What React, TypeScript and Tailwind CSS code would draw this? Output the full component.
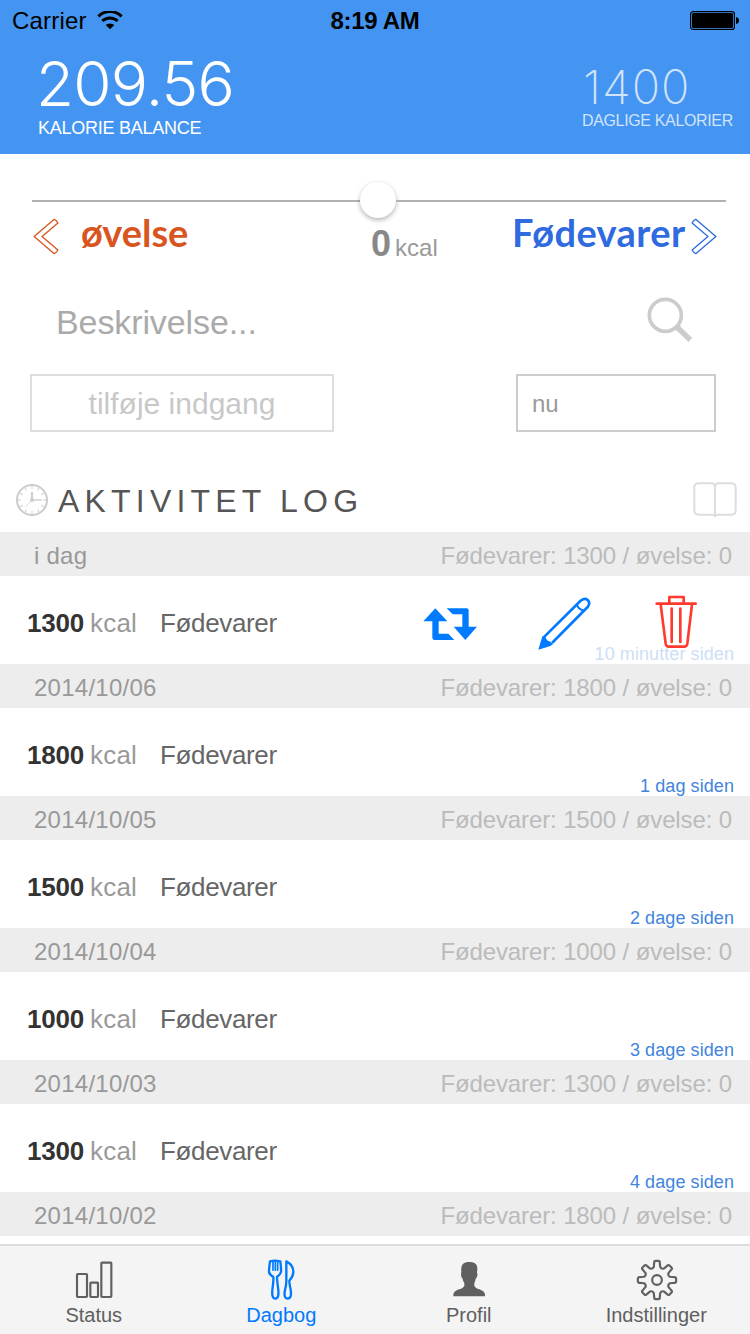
import type { ReactNode } from "react";

const SANS = "font-['Liberation_Sans',Arial,sans-serif]";

type Entry = { day: string; kcal: string; ago: string; active?: boolean };

const ENTRIES: Entry[] = [
  { day: "i dag", kcal: "1300", ago: "10 minutter siden", active: true },
  { day: "2014/10/06", kcal: "1800", ago: "1 dag siden" },
  { day: "2014/10/05", kcal: "1500", ago: "2 dage siden" },
  { day: "2014/10/04", kcal: "1000", ago: "3 dage siden" },
  { day: "2014/10/03", kcal: "1300", ago: "4 dage siden" },
];

function StatusBar() {
  return (
    <div className="grid h-[42px] grid-cols-3 text-2xl leading-[42px] text-black">
      <div className="flex pl-[12px]">
        <span className="tracking-[0.2px]">Carrier</span>
        <svg className="mt-[11px] ml-[10px] h-[19px] w-[26px]" viewBox="0 0 78 57">
          <path d="M4 16A50 50 0 0 1 74 16" fill="none" stroke="currentColor" strokeWidth="9" />
          <path d="M16 30A33 33 0 0 1 62 30" fill="none" stroke="currentColor" strokeWidth="9" />
          <path d="M26 42A20 20 0 0 1 52 42L39 55Z" fill="currentColor" />
        </svg>
      </div>
      <div className="text-center font-bold tracking-[-0.3px]">8:19 AM</div>
      <div className="flex justify-end pr-[11px]">
        <svg className="mt-[11px] h-[19px] w-[49px]" viewBox="0 0 49 19">
          <rect x="0.6" y="0.6" width="43.8" height="17.8" rx="2.5" fill="none" stroke="currentColor" strokeWidth="1.2" />
          <rect x="2" y="2" width="41" height="15" rx="1.5" fill="currentColor" />
          <path d="M46 6Q49 6.5 49 9.5T46 13Z" fill="currentColor" />
        </svg>
      </div>
    </div>
  );
}

function Header() {
  return (
    <header className="h-[154px] bg-[#4495f1] text-white">
      <StatusBar />
      <div className="flex justify-between pr-[17px] pl-[38px]">
        <div className="whitespace-nowrap">
          <div className="-ml-[2px] h-[75px] pt-[11px] font-['Inter',sans-serif] text-[62px] leading-[62px] font-light tracking-[-0.8px]">
            209.56
          </div>
          <div className="text-lg leading-[22px] tracking-[-0.25px]">KALORIE BALANCE</div>
        </div>
        <div className="w-[151px] pt-[22px] whitespace-nowrap text-white/75">
          <div className="h-[46px] pl-px font-['Inter',sans-serif] text-[47px] leading-[46px] font-extralight tracking-[1px]">1400</div>
          <div className="text-base leading-[21px] tracking-[-0.35px]">DAGLIGE KALORIER</div>
        </div>
      </div>
    </header>
  );
}

function Chevron({ className }: { className: string }) {
  return (
    <svg className={className} viewBox="0 0 78 112">
      <path
        d="M3 56L64 4Q70 6 75 15L27 56L75 97Q70 106 64 108Z"
        fill="none"
        stroke="currentColor"
        strokeWidth="4"
        strokeLinejoin="round"
      />
    </svg>
  );
}

function CalorieSlider() {
  return (
    <section className="h-[120px] pt-[28px]">
      <div className="mr-[24px] ml-[32px] flex h-[36px] items-center">
        <div className="mt-[2px] h-[2px] w-[328px] bg-[#b2b2b2]" />
        <div className="size-[36px] rounded-full bg-white shadow-[0_2px_5px_rgba(0,0,0,0.3)]" />
        <div className="mt-[2px] h-[2px] flex-1 bg-[#b2b2b2]" />
      </div>
      <div className="flex whitespace-nowrap">
        <div className="flex w-[370px] pl-[33px] text-[#d9551f]">
          <Chevron className="h-[37px] w-[26px]" />
          <span className="ml-[22px] font-['Lato',sans-serif] text-[38px] leading-[29px] font-bold">øvelse</span>
        </div>
        <div className="flex w-[142px] pl-px leading-[52px]">
          <span className="text-4xl leading-[52px] font-bold text-[#888888]">0</span>
          <span className="ml-[4px] pt-[4px] text-2xl leading-[52px] text-[#999999]">kcal</span>
        </div>
        <div className="flex text-[#2f6bdf]">
          <span className="w-[179px] font-['Lato',sans-serif] text-[38px] leading-[29px] font-bold tracking-[0.4px]">Fødevarer</span>
          <Chevron className="h-[37px] w-[26px] -scale-x-100" />
        </div>
      </div>
    </section>
  );
}

function EntryForm() {
  return (
    <section className="h-[182px] pt-[20px]">
      <div className="flex h-[80px] justify-between pr-[57px] pl-[56px]">
        <span className="text-[34px] leading-[56px] tracking-[-0.1px] text-[#aaaaaa]">Beskrivelse...</span>
        <svg className="mt-[3px] h-[46px] w-[46px]" viewBox="0 0 138 138" fill="none" stroke="#cccccc">
          <circle cx="55" cy="55" r="48" strokeWidth="11" />
          <path d="M87 87L130 129" strokeWidth="16" />
          <path d="M87 87L95 95" strokeWidth="19" />
        </svg>
      </div>
      <div className="flex justify-between pr-[34px] pl-[30px]">
        <button className="h-[58px] w-[304px] border-2 border-[#dddddd] text-center text-[30px] leading-[56px] text-[#c8c8c8]">
          tilføje indgang
        </button>
        <div className="h-[58px] w-[200px] border-2 border-[#cccccc] pl-[14px] text-2xl leading-[56px] text-[#999999]">nu</div>
      </div>
    </section>
  );
}

const TICKS = Array.from({ length: 12 }, (_, i) => i * 30);

function LogTitle() {
  return (
    <div className="flex h-[76px] pr-[13px] pl-[16px]">
      <svg className="mt-[28px] size-[32px]" viewBox="0 0 96 96" fill="none" stroke="#cccccc">
        <circle cx="48" cy="48" r="45" strokeWidth="6" />
        {TICKS.map((a) => (
          <path key={a} d="M48 6V15" strokeWidth="3" transform={`rotate(${a} 48 48)`} />
        ))}
        <path d="M48 24V46" strokeWidth="6" />
        <path d="M48 48H78" strokeWidth="4" />
        <path d="M48 48L28 69" strokeWidth="2" />
        <circle cx="48" cy="48" r="6" fill="#cccccc" stroke="none" />
      </svg>
      <h2 className="ml-[10px] flex-1 pt-[24px] text-[32px] leading-[42px] tracking-[5.2px] text-[#555555]">AKTIVITET LOG</h2>
      <svg className="mt-[26px] h-[35px] w-[44px]" viewBox="0 0 132 105" fill="none" stroke="#dddddd" strokeWidth="6">
        <path d="M66 10Q62 4 56 4H17Q4 4 4 17V85Q4 98 17 98H56Q62 98 66 102Q70 98 76 98H115Q128 98 128 85V17Q128 4 115 4H76Q70 4 66 10V103" />
      </svg>
    </div>
  );
}

function DayHeader({ day, kcal }: { day: string; kcal: string }) {
  return (
    <div className="flex h-[44px] justify-between bg-[#ededed] pr-[18px] pl-[34px] text-2xl leading-[47px]">
      <span className="tracking-[0.25px] text-[#999999]">{day}</span>
      <span className="tracking-[-0.12px] text-[#bbbbbb]">Fødevarer: {kcal} / øvelse: 0</span>
    </div>
  );
}

function RowActions() {
  return (
    <div className="ml-auto flex pt-[18px] pr-[52px]">
      <svg className="mt-[13px] h-[35px] w-[55px] text-[#007aff]" viewBox="0 0 165 105" fill="currentColor">
        <path d="M37 4L73 43H47V80H76L94 99H35Q28 99 28 92V43H1Z" />
        <path d="M71 4H131Q137 4 137 10V59H162L127 99L92 59H118V22H89Z" />
      </svg>
      <svg
        className="mt-[3px] ml-[59px] h-[54px] w-[54px] text-[#007aff]"
        viewBox="0 0 162 162"
        fill="none"
        stroke="currentColor"
        strokeWidth="8"
        strokeLinejoin="round"
      >
        <path d="M20 121L130 12Q142 1 152 9Q161 18 152 30L45 138" />
        <path d="M4 158L16 118L26 120Q28 132 38 133L48 142L40 147Z" fill="currentColor" stroke="none" />
        <path d="M119 22Q123 37 140 41" strokeWidth="6" />
      </svg>
      <svg
        className="-mt-[1px] ml-[64px] h-[56px] w-[43px] text-[#ff3b30]"
        viewBox="0 0 129 168"
        fill="none"
        stroke="currentColor"
        strokeWidth="8"
        strokeLinecap="round"
        strokeLinejoin="round"
      >
        <path d="M5 32H122M43 30V12H86V30" />
        <path d="M17 34L32 152Q34 161 41 161H88Q95 161 97 152L111 34M50 47V147M76 47V147" />
      </svg>
    </div>
  );
}

function LogRow({ entry }: { entry: Entry }) {
  return (
    <>
      <DayHeader day={entry.day} kcal={entry.kcal} />
      <div className="relative flex h-[88px] bg-white pl-[27px] text-[26px] leading-[94px] whitespace-nowrap">
        <span className="w-[63px] font-bold tracking-[-0.2px] text-[#333333]">{entry.kcal}</span>
        <span className="w-[70px] tracking-[0.2px] text-[#999999]">kcal</span>
        <span className="tracking-[-0.35px] text-[#666666]">Fødevarer</span>
        <span
          className={
            entry.active
              ? "absolute right-[16px] bottom-0 text-lg leading-[20px] tracking-[0.08px] text-[#cddef6]"
              : "absolute right-[16px] bottom-0 text-lg leading-[20px] tracking-[0.08px] text-[#3f85dc]"
          }
        >
          {entry.ago}
        </span>
        {entry.active && <RowActions />}
      </div>
    </>
  );
}

function StatusIcon() {
  return (
    <svg className="h-[44px] w-[44px]" viewBox="0 0 132 132" fill="none" stroke="currentColor" strokeWidth="6.5">
      <rect x="15" y="48" width="30" height="69" rx="2" />
      <rect x="55" y="74" width="23" height="43" rx="2" />
      <rect x="88" y="14" width="30" height="103" rx="2" />
    </svg>
  );
}

function CutleryIcon() {
  return (
    <svg
      className="h-[44px] w-[44px]"
      viewBox="0 0 132 132"
      fill="none"
      stroke="currentColor"
      strokeWidth="7"
      strokeLinejoin="round"
      strokeLinecap="round"
    >
      <path d="M33 10Q48 6 64 10Q67 32 66 42Q64 49 54 57Q54 66 57 88Q62 122 49 122Q36 122 41 88Q44 66 43 57Q31 49 30 42Q30 32 33 10Z" />
      <path d="M42 11V37M49 11V37M56 11V37" strokeWidth="5" />
      <path d="M82 10Q104 22 103 43Q102 56 91 68Q91 76 95 95Q99 122 86 122Q73 121 78 96Q82 82 82 68Z" />
    </svg>
  );
}

function ProfileIcon() {
  return (
    <svg className="h-[44px] w-[44px]" viewBox="0 0 132 132" fill="currentColor">
      <path d="M66 12C81 12 92 17 91 33L90 44Q93 48 90 56Q88 61 86 62Q85 71 82 75V83Q84 90 97 94Q112 99 114 109V115H19V109Q21 99 36 94Q50 90 52 83V75Q48 70 46 61Q42 58 42 49L43 41C41 20 49 12 66 12Z" />
    </svg>
  );
}

function gearOutline() {
  const point = (radius: number, degrees: number) => {
    const a = (degrees * Math.PI) / 180;
    return `${(66 + radius * Math.sin(a)).toFixed(1)} ${(66 - radius * Math.cos(a)).toFixed(1)}`;
  };
  const teeth = Array.from({ length: 8 }, (_, i) => {
    const c = i * 45;
    return `${i === 0 ? "M" : "L"}${point(40, c - 14)}L${point(53, c - 9)}Q${point(58, c - 9)} ${point(57.5, c - 4)}L${point(57.5, c + 4)}Q${point(58, c + 9)} ${point(53, c + 9)}L${point(40, c + 14)}Q${point(35, c + 22.5)} ${point(40, c + 31)}`;
  });
  return `${teeth.join("")}Z`;
}

function GearIcon() {
  return (
    <svg
      className="ml-px h-[44px] w-[44px]"
      viewBox="0 0 132 132"
      fill="none"
      stroke="currentColor"
      strokeWidth="6.5"
      strokeLinejoin="round"
    >
      <path d={gearOutline()} />
      <circle cx="66" cy="66" r="14.5" strokeWidth="6.5" />
    </svg>
  );
}

function Tab({ label, active, children }: { label: string; active?: boolean; children: ReactNode }) {
  return (
    <div className={active ? "flex flex-1 flex-col items-center text-[#007aff]" : "flex flex-1 flex-col items-center text-[#606060]"}>
      <div className="mt-[12px] h-[44px]">{children}</div>
      <span className="text-xl leading-[26px]">{label}</span>
    </div>
  );
}

export default function App() {
  return (
    <div className={`${SANS} flex h-[1334px] w-[750px] flex-col overflow-hidden bg-white`}>
      <Header />
      <CalorieSlider />
      <EntryForm />
      <LogTitle />
      <main className="h-[712px] shrink-0">
        {ENTRIES.map((entry) => (
          <LogRow key={entry.day} entry={entry} />
        ))}
        <DayHeader day="2014/10/02" kcal="1800" />
      </main>
      <nav className="flex h-[90px] shrink-0 border-t-2 border-[#dddddd] bg-[#f4f4f4]">
        <Tab label="Status">
          <StatusIcon />
        </Tab>
        <Tab label="Dagbog" active>
          <CutleryIcon />
        </Tab>
        <Tab label="Profil">
          <ProfileIcon />
        </Tab>
        <Tab label="Indstillinger">
          <GearIcon />
        </Tab>
      </nav>
    </div>
  );
}
